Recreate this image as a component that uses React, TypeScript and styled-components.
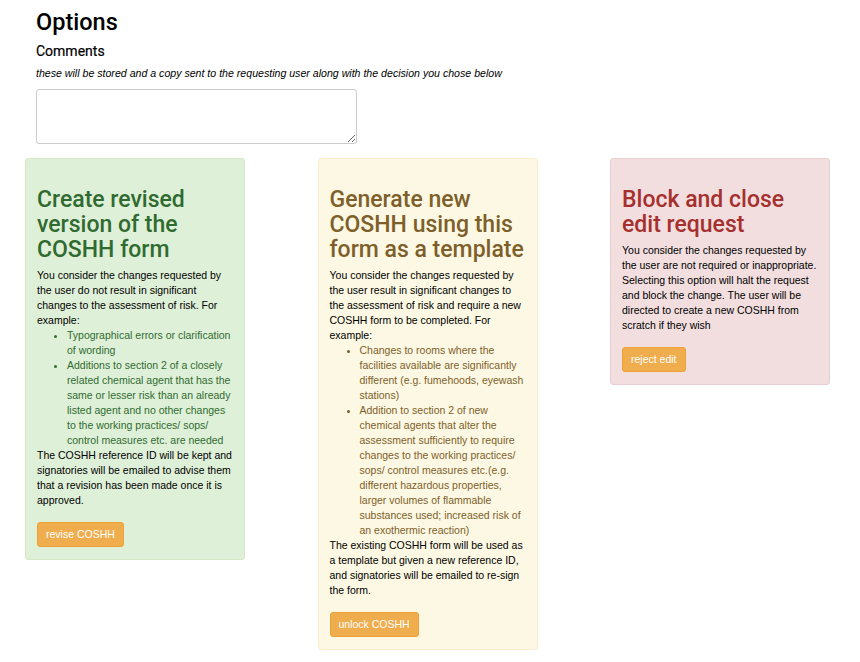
import React from "react";
import styled, { createGlobalStyle } from "styled-components";

const Global = createGlobalStyle`
  html, body { margin: 0; padding: 0; background: #fff; }
  body { font-family: "Liberation Sans", Arial, sans-serif; color: #000; font-size: 10.5px; line-height: 15px; }
`;

const Page = styled.div`
  padding: 0 25px 20px 25px;
`;

const Intro = styled.section`
  padding: 0 11px;
`;

const PageTitle = styled.h2`
  margin: 10px 0 9px;
  font-family: Roboto, "Liberation Sans", sans-serif;
  font-size: 23.5px;
  font-weight: 500;
  line-height: 24px;
  color: #000;
`;

const SubTitle = styled.h4`
  margin: 0 0 7px;
  font-family: Roboto, "Liberation Sans", sans-serif;
  font-size: 14px;
  font-weight: 400;
  line-height: 16px;
  color: #000;
  -webkit-text-stroke: 0.2px #000;
`;

const Hint = styled.p`
  margin: 0 0 8px;
  font-style: italic;
  font-size: 10.6px;
  color: #000;
`;

const Comments = styled.textarea`
  display: block;
  box-sizing: border-box;
  width: 321px;
  height: 55px;
  border: 1px solid #cccccc;
  border-radius: 3px;
  margin: 0 0 14px;
`;

const Grid = styled.div`
  display: grid;
  grid-template-columns: repeat(3, 220px);
  column-gap: 72.5px;
  align-items: start;
`;

const tones = {
  success: { bg: "#dff0d8", border: "#d6e9c6", text: "#2f6b31" },
  warning: { bg: "#fcf8e3", border: "#faebcc", text: "#7e5f2a" },
  danger: { bg: "#f2dede", border: "#ebccd1", text: "#a5302e" },
};
type Tone = keyof typeof tones;

const Card = styled.div<{ $tone: Tone }>`
  box-sizing: border-box;
  background: ${(p) => tones[p.$tone].bg};
  border: 1px solid ${(p) => tones[p.$tone].border};
  border-radius: 3px;
  padding: 11px 11px 12px;
  color: #000;
`;

const CardTitle = styled.h2<{ $tone: Tone }>`
  margin: 17px 0 6px;
  font-family: Roboto, "Liberation Sans", sans-serif;
  font-size: 23px;
  font-weight: 500;
  line-height: 25px;
  color: ${(p) => tones[p.$tone].text};
`;

const Text = styled.p`
  margin: 0;
`;

const List = styled.ul<{ $tone: Tone }>`
  margin: 0;
  padding-left: 30px;
  color: ${(p) => tones[p.$tone].text};
`;

const Button = styled.button`
  margin-top: 14px;
  font-family: inherit;
  font-size: 10.5px;
  line-height: 15px;
  color: #fff;
  background: #f0ad4e;
  border: 1px solid #eea236;
  border-radius: 3px;
  padding: 4px 8px;
  cursor: pointer;
`;

export default function App() {
  return (
    <Page>
      <Global />
      <Intro>
        <PageTitle>Options</PageTitle>
        <SubTitle>Comments</SubTitle>
        <Hint>these will be stored and a copy sent to the requesting user along with the decision you chose below</Hint>
        <Comments />
      </Intro>
      <Grid>
        <Card $tone="success">
          <CardTitle $tone="success">Create revised version of the COSHH form</CardTitle>
          <Text>
            You consider the changes requested by the user do not result in significant changes to the assessment of risk. For example:
          </Text>
          <List $tone="success">
            <li>Typographical errors or clarification of wording</li>
            <li>
              Additions to section 2 of a closely related chemical agent that has the same or lesser risk than an already listed agent and no other changes to the working practices/ sops/ control measures etc. are needed
            </li>
          </List>
          <Text>
            The COSHH reference ID will be kept and signatories will be emailed to advise them that a revision has been made once it is approved.
          </Text>
          <Button>revise COSHH</Button>
        </Card>
        <Card $tone="warning">
          <CardTitle $tone="warning">Generate new COSHH using this form as a template</CardTitle>
          <Text>
            You consider the changes requested by the user result in significant changes to the assessment of risk and require a new COSHH form to be completed. For example:
          </Text>
          <List $tone="warning">
            <li>Changes to rooms where the facilities available are significantly different (e.g. fumehoods, eyewash stations)</li>
            <li>
              Addition to section 2 of new chemical agents that alter the assessment sufficiently to require changes to the working practices/ sops/ control measures etc.(e.g. different hazardous properties, larger volumes of flammable substances used; increased risk of an exothermic reaction)
            </li>
          </List>
          <Text>
            The existing COSHH form will be used as a template but given a new reference ID, and signatories will be emailed to re-sign the form.
          </Text>
          <Button>unlock COSHH</Button>
        </Card>
        <Card $tone="danger">
          <CardTitle $tone="danger">Block and close edit request</CardTitle>
          <Text>
            You consider the changes requested by the user are not required or inappropriate. Selecting this option will halt the request and block the change. The user will be directed to create a new COSHH from scratch if they wish
          </Text>
          <Button>reject edit</Button>
        </Card>
      </Grid>
    </Page>
  );
}
